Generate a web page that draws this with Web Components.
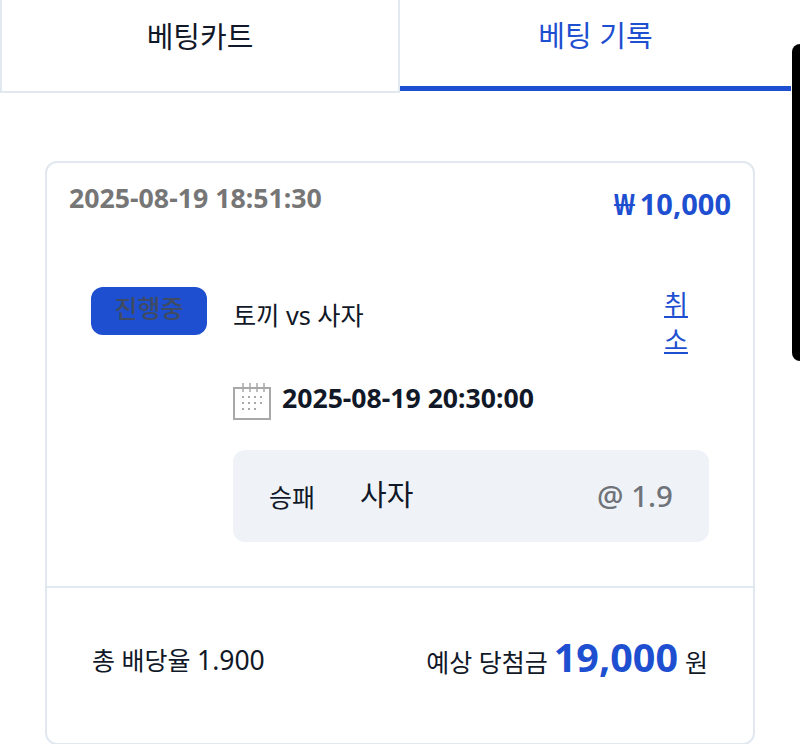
<!DOCTYPE html>
<html lang="ko">
<head>
<meta charset="utf-8">
<title>베팅 기록</title>
<style>
  html, body { margin: 0; padding: 0; background: #fff; }
  body {
    width: 800px;
    height: 744px;
    overflow: hidden;
    position: relative;
    font-family: "Noto Sans", "Noto Sans CJK KR", sans-serif;
    color: #111827;
  }
</style>
</head>
<body>
<bet-page>
  <bet-tabs slot="tabs"></bet-tabs>
  <bet-card></bet-card>
</bet-page>
<scroll-handle></scroll-handle>

<script>
class BetPage extends HTMLElement {
  constructor() {
    super();
    this.attachShadow({mode: 'open'});
    this.shadowRoot.innerHTML = `
      <style>
        :host { display: block; width: 791px; }
        #content { padding: 68px 36px 0 45px; }
      </style>
      <slot name="tabs"></slot>
      <div id="content"><slot></slot></div>
    `;
  }
}

class BetTabs extends HTMLElement {
  constructor() {
    super();
    this.attachShadow({mode: 'open'});
    this.shadowRoot.innerHTML = `
      <style>
        :host { display: grid; grid-template-columns: 400px 391px; height: 93px; font-size: 29px; }
        div { box-sizing: border-box; text-align: center; }
        #cart {
          border: 2px solid #e2e8f0;
          border-top: none;
          color: #111827;
          padding-top: 15px;
          line-height: 44px;
        }
        #history {
          height: 91px;
          border-bottom: 5px solid #1e4fd0;
          color: #1e4fd0;
          padding-top: 14px;
          line-height: 44px;
        }
      </style>
      <div id="cart">베팅카트</div>
      <div id="history">베팅 기록</div>
    `;
  }
}

class BetCard extends HTMLElement {
  constructor() {
    super();
    this.attachShadow({mode: 'open'});
    this.shadowRoot.innerHTML = `
      <style>
        :host {
          display: block;
          box-sizing: border-box;
          width: 710px;
          height: 584px;
          border: 2px solid #e2e8f0;
          border-radius: 12px;
        }
        header { display: flex; justify-content: space-between; padding: 17px 22px 0 22px; height: 70px; box-sizing: border-box; }
        #placed { font-size: 26.7px; font-weight: 700; color: #767676; line-height: 36px; }
        #stake { font-size: 29px; font-weight: 700; color: #1e4fd0; line-height: 44px; word-spacing: -3px; padding-top: 2px; }
        #body { display: grid; grid-template-columns: 116px 1fr; column-gap: 26px; padding: 54px 44px 0 44px; height: 355px; box-sizing: border-box; border-bottom: 2px solid #e2e8f0; }
        #status {
          height: 48px;
          border-radius: 12px;
          background: #1e4fd0;
          color: #3f4b63;
          font-size: 25px;
          font-weight: 500;
          text-align: center;
          line-height: 42px;
        }
        #match { display: flex; justify-content: space-between; height: 92px; }
        #teams { font-size: 25.2px; line-height: 30px; padding-top: 13px; }
        #cancel { width: 26px; word-break: break-all; text-align: center; font-size: 26px; line-height: 36px; margin-top: -1px; margin-right: 20px; color: #1e4fd0; text-decoration: underline; }
        #kickoff { display: flex; align-items: center; gap: 11px; height: 38px; font-size: 26.6px; font-weight: 700; }
        svg { display: block; flex: none; margin-top: 6px; }
        #pick {
          display: flex;
          align-items: center;
          height: 92px;
          margin-top: 33px;
          padding: 0 36px;
          background: #eff3f8;
          border-radius: 12px;
        }
        #market { font-size: 25px; width: 91px; }
        #choice { font-size: 29px; flex: 1; padding-bottom: 6px; }
        #odds { font-size: 29.5px; font-weight: 500; color: #6f7379; padding-bottom: 2px; }
        footer { display: flex; justify-content: space-between; align-items: center; box-sizing: border-box; padding: 0 45px 4px 45px; height: 146px; font-size: 25px; }
        #rate { font-size: 26.5px; }
        #payout { display: flex; align-items: baseline; margin-bottom: 4px; }
        #amount { font-size: 39.5px; font-weight: 700; color: #1e4fd0; margin: 0 7px 0 6px; }
      </style>
      <header>
        <div id="placed">2025-08-19 18:51:30</div>
        <div id="stake">₩ 10,000</div>
      </header>
      <div id="body">
        <div id="status">진행중</div>
        <div>
          <div id="match">
            <div id="teams">토끼 vs 사자</div>
            <div id="cancel">취소</div>
          </div>
          <div id="kickoff">
            <svg width="38" height="38" viewBox="0 0 38 38" fill="none">
              <path d="M1 6H37V37H1Z" stroke="#a8a8a8" stroke-width="2"/>
              <path d="M10 1V10M17 1V10M24 1V10M31 1V10" stroke="#a8a8a8" stroke-width="1.5"/>
              <path d="M9 15h2M15 15h2M21 15h2M27 15h2M9 21h2M15 21h2M21 21h2M27 21h2M9 27h2M15 27h2M21 27h2" stroke="#a8a8a8" stroke-width="2"/>
            </svg>
            <span>2025-08-19 20:30:00</span>
          </div>
          <div id="pick">
            <span id="market">승패</span>
            <span id="choice">사자</span>
            <span id="odds">@ 1.9</span>
          </div>
        </div>
      </div>
      <footer>
        <div id="total">총 배당율 <span id="rate">1.900</span></div>
        <div id="payout"><span>예상 당첨금</span><span id="amount">19,000</span><span>원</span></div>
      </footer>
    `;
  }
}

class ScrollHandle extends HTMLElement {
  constructor() {
    super();
    this.attachShadow({mode: 'open'});
    this.shadowRoot.innerHTML = `
      <style>
        :host {
          position: absolute;
          left: 792px;
          top: 44px;
          width: 8px;
          height: 317px;
          background: #000;
          border-radius: 8px 0 0 8px;
        }
      </style>
    `;
  }
}

customElements.define('bet-page', BetPage);
customElements.define('bet-tabs', BetTabs);
customElements.define('bet-card', BetCard);
customElements.define('scroll-handle', ScrollHandle);
</script>
</body>
</html>
